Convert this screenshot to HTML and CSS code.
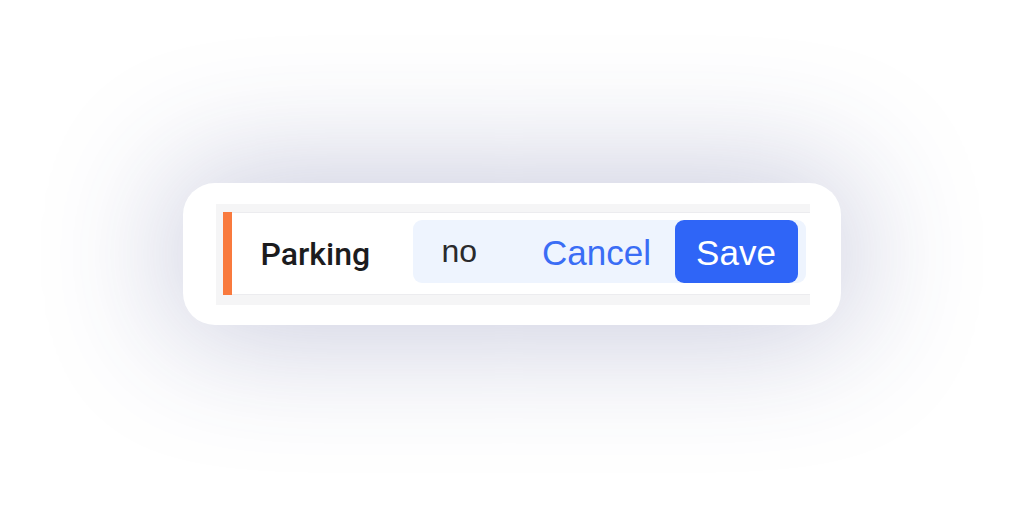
FILE: index.html
```html
<!DOCTYPE html>
<html lang="en">
<head>
<meta charset="utf-8">
<title>Edit row</title>
<link rel="stylesheet" href="styles.css">
</head>
<body>
  <main class="stage">
    <section class="card">
      <div class="table-strip">
        <div class="row">
          <span class="row-accent"></span>
          <span class="row-label">Parking</span>
          <div class="edit-area">
            <span class="edit-value">no</span>
            <button class="btn-cancel" type="button">Cancel</button>
            <button class="btn-save" type="button">Save</button>
          </div>
        </div>
      </div>
    </section>
  </main>
</body>
</html>
```
FILE: styles.css
```css
* { box-sizing: border-box; }
html, body {
  margin: 0;
  padding: 0;
  background: #ffffff;
}
body {
  width: 1024px;
  height: 507px;
  overflow: hidden;
  font-family: "Liberation Sans", Arial, sans-serif;
}
.stage {
  width: 1024px;
  height: 507px;
  display: flex;
  align-items: center;
  justify-content: center;
}
.card {
  width: 658px;
  height: 142px;
  background: #ffffff;
  border-radius: 32px;
  box-shadow: 0 0 130px 12px rgba(52, 60, 130, 0.27);
  padding: 21px 31px 20px 33px;
  display: flex;
  margin-left: -1px;
}
.table-strip {
  flex: 1;
  background: #f5f5f6;
  padding: 8px 0 10px 7px;
  display: flex;
}
.row {
  flex: 1;
  background: #ffffff;
  border-top: 1px solid #ececef;
  border-bottom: 1px solid #ececef;
  display: flex;
  align-items: center;
  padding-right: 4px;
}
.row-accent {
  align-self: stretch;
  width: 9px;
  margin-top: -1px;
  margin-bottom: -1px;
  background: #f97a3e;
}
.row-label {
  font-family: Roboto, "Liberation Sans", sans-serif;
  font-weight: 500;
  font-size: 32px;
  color: #1c1c1e;
  margin-left: 29px;
  width: 152px;
  padding-top: 2px;
}
.edit-area {
  flex: 1;
  height: 63px;
  margin-top: -4px;
  background: #eef4fe;
  border-radius: 9px;
  display: flex;
  align-items: stretch;
  padding-left: 29px;
  padding-right: 8px;
}
.edit-value {
  font-size: 32px;
  color: #2a2a2c;
  display: flex;
  align-items: center;
  width: 77px;
  padding-top: 1px;
}
.btn-cancel,
.btn-save {
  font-family: "Liberation Sans", Arial, sans-serif;
  font-size: 35px;
  border: none;
  margin: 0;
  padding-top: 4px;
  cursor: pointer;
  display: flex;
  align-items: center;
  justify-content: center;
}
.btn-cancel {
  background: transparent;
  color: #3a6df5;
  padding-left: 22px;
  padding-right: 22px;
  width: 156px;
}
.btn-save {
  background: #2f65f7;
  color: #ffffff;
  border-radius: 9px;
  width: 123px;
  font-weight: 500;
}
```
